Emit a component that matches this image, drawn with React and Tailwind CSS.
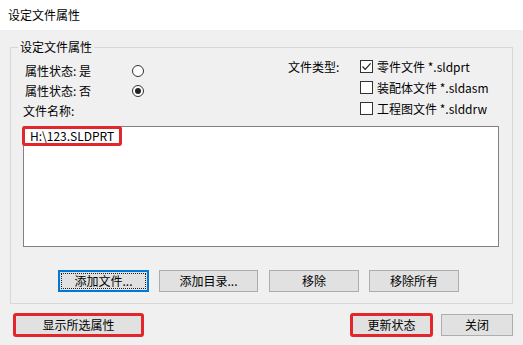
import React from 'react';

const Radio = ({ checked }) => (
  <span className="w-[12px] h-[12px] rounded-full border border-[#333] bg-white flex items-center justify-center">
    {checked && <span className="w-[6px] h-[6px] rounded-full bg-[#222]" />}
  </span>
);

const Check = ({ checked }) => (
  <span className="w-[13px] h-[13px] border border-[#333] bg-white flex items-center justify-center shrink-0">
    {checked && (
      <svg width="11" height="11" viewBox="0 0 11 11">
        <path d="M1.5 5.5 L4.2 8.3 L9.6 2.4" fill="none" stroke="#222" strokeWidth="1.2" />
      </svg>
    )}
  </span>
);

const Btn = ({ label, className = '' }) => (
  <button className={`h-[22px] bg-[#e1e1e1] border border-[#adadad] text-[12px] leading-none text-black flex items-center justify-center ${className}`}>
    {label}
  </button>
);

const App = () => {
  const types = [
    { label: '零件文件 *.sldprt', checked: true },
    { label: '装配体文件 *.sldasm', checked: false },
    { label: '工程图文件 *.slddrw', checked: false },
  ];

  return (
    <div className="w-[523px] h-[345px] bg-[#f0f0f0] flex flex-col overflow-hidden text-[12px] text-black font-['Noto_Sans_CJK_SC',sans-serif]">
      <div className="h-[30px] bg-white flex items-center pl-[8px] shrink-0">设定文件属性</div>

      <div className="px-[10px]">
        <fieldset className="mt-[9px] border border-[#d7d7d7]">
          <legend className="ml-[7px] px-[2px] leading-[16px]">设定文件属性</legend>

          <div className="h-[71px] flex">
            <div className="w-[277px] pl-[14px] pt-[6px]">
              <div className="h-[20px] flex items-center">
                <span className="w-[107px]">属性状态: 是</span>
                <Radio />
              </div>
              <div className="h-[20px] flex items-center">
                <span className="w-[107px]">属性状态: 否</span>
                <Radio checked />
              </div>
              <div className="h-[20px] flex items-center -ml-[2px]">文件名称:</div>
            </div>
            <div className="flex pt-[1px]">
              <div className="w-[72px] h-[21px] flex items-center">文件类型:</div>
              <div>
                {types.map((t) => (
                  <div key={t.label} className="h-[21px] flex items-center gap-[4px]">
                    <Check checked={t.checked} />
                    <span>{t.label}</span>
                  </div>
                ))}
              </div>
            </div>
          </div>

          <div className="ml-[12px] mr-[13px] h-[121px] bg-white border border-[#828282]">
            <div className="inline-flex items-center -ml-[2px] -mt-[2px] h-[20px] px-[5px] border-[3px] border-[#e3262b] rounded-[3px]">
              H:\123.SLDPRT
            </div>
          </div>

          <div className="flex mt-[23px] mb-[11px] ml-[47px]">
            <button className="w-[91px] h-[22px] bg-[#e1e1e1] border-2 border-[#0078d7] p-[1px]">
              <span className="w-full h-full border border-dotted border-[#222] flex items-center justify-center leading-none">添加文件...</span>
            </button>
            <Btn label="添加目录..." className="w-[99px] ml-[10px]" />
            <Btn label="移除" className="w-[90px] ml-[11px]" />
            <Btn label="移除所有" className="w-[90px] ml-[10px]" />
          </div>
        </fieldset>

        <div className="flex justify-between mt-[9px]">
          <div className="ml-[3px] w-[131px] h-[24px] border-[3px] border-[#e3262b] rounded-[3px]">
            <div className="w-full h-full bg-[#e1e1e1] flex items-center justify-center">显示所选属性</div>
          </div>
          <div className="flex items-start">
            <div className="w-[83px] h-[24px] border-[3px] border-[#e3262b] rounded-[3px]">
              <div className="w-full h-full bg-[#e1e1e1] flex items-center justify-center">更新状态</div>
            </div>
            <Btn label="关闭" className="w-[72px] ml-[8px] mt-[1px]" />
          </div>
        </div>
      </div>
    </div>
  );
};

export default App;
